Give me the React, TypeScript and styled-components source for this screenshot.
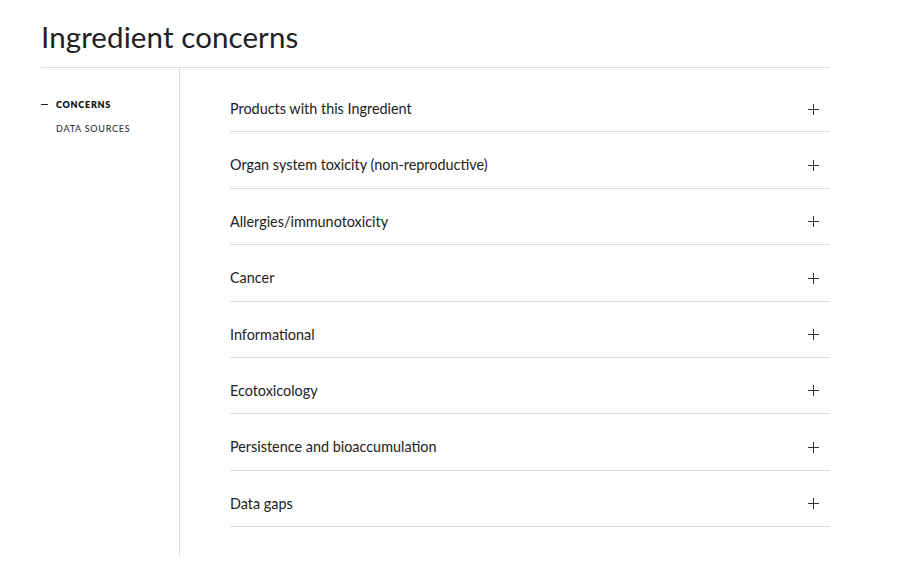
import styled, { createGlobalStyle } from "styled-components";

const GlobalStyle = createGlobalStyle`
  body {
    margin: 0;
    background: #fff;
    font-family: Lato, "Noto Sans", sans-serif;
    color: #222;
  }
`;

const Page = styled.div`
  width: 913px;
  height: 562px;
  box-sizing: border-box;
  padding: 0 83px 0 41px;
  display: flex;
  flex-direction: column;
`;

const Title = styled.h1`
  margin: 0;
  padding-top: 19px;
  height: 68px;
  box-sizing: border-box;
  border-bottom: 1px solid #ddd;
  font-size: 29.5px;
  font-weight: 400;
  line-height: 36px;
  color: #222;
  letter-spacing: 0.1px;
`;

const Body = styled.div`
  flex: 1;
  display: flex;
  padding-bottom: 6px;
`;

const Sidebar = styled.nav`
  width: 138px;
  flex-shrink: 0;
  border-right: 1px solid #ddd;
  padding-top: 30px;
  display: flex;
  flex-direction: column;
  gap: 11px;
`;

const NavItem = styled.div<{ $active?: boolean }>`
  display: flex;
  align-items: center;
  font-size: 9px;
  line-height: 13px;
  letter-spacing: 0.75px;
  font-weight: ${(p) => (p.$active ? 800 : 500)};
  color: ${(p) => (p.$active ? "#111" : "#333")};
  padding-left: ${(p) => (p.$active ? 0 : 15)}px;

  &::before {
    content: "";
    display: ${(p) => (p.$active ? "block" : "none")};
    width: 7px;
    height: 1px;
    background: #222;
    margin-right: 8px;
  }
`;

const Main = styled.main`
  flex: 1;
  padding: 8px 0 0 50px;
`;

const Row = styled.div`
  display: flex;
  align-items: center;
  justify-content: space-between;
  padding: 22px 0 11.4px;
  border-bottom: 1px solid #ddd;
`;

const RowLabel = styled.span`
  font-size: 14.4px;
  line-height: 22px;
  color: #222;
`;

const PlusIcon = styled.svg`
  width: 11px;
  height: 11px;
  margin-right: 11px;
  color: #333;
`;

const rows = [
  "Products with this Ingredient",
  "Organ system toxicity (non-reproductive)",
  "Allergies/immunotoxicity",
  "Cancer",
  "Informational",
  "Ecotoxicology",
  "Persistence and bioaccumulation",
  "Data gaps",
];

const Plus = () => (
  <PlusIcon viewBox="0 0 11 11">
    <path d="M5.5 0v11M0 5.5h11" stroke="currentColor" strokeWidth="1" />
  </PlusIcon>
);

export default function App() {
  return (
    <>
      <GlobalStyle />
      <Page>
        <Title>Ingredient concerns</Title>
        <Body>
          <Sidebar>
            <NavItem $active>CONCERNS</NavItem>
            <NavItem>DATA SOURCES</NavItem>
          </Sidebar>
          <Main>
            {rows.map((r) => (
              <Row key={r}>
                <RowLabel>{r}</RowLabel>
                <Plus />
              </Row>
            ))}
          </Main>
        </Body>
      </Page>
    </>
  );
}
